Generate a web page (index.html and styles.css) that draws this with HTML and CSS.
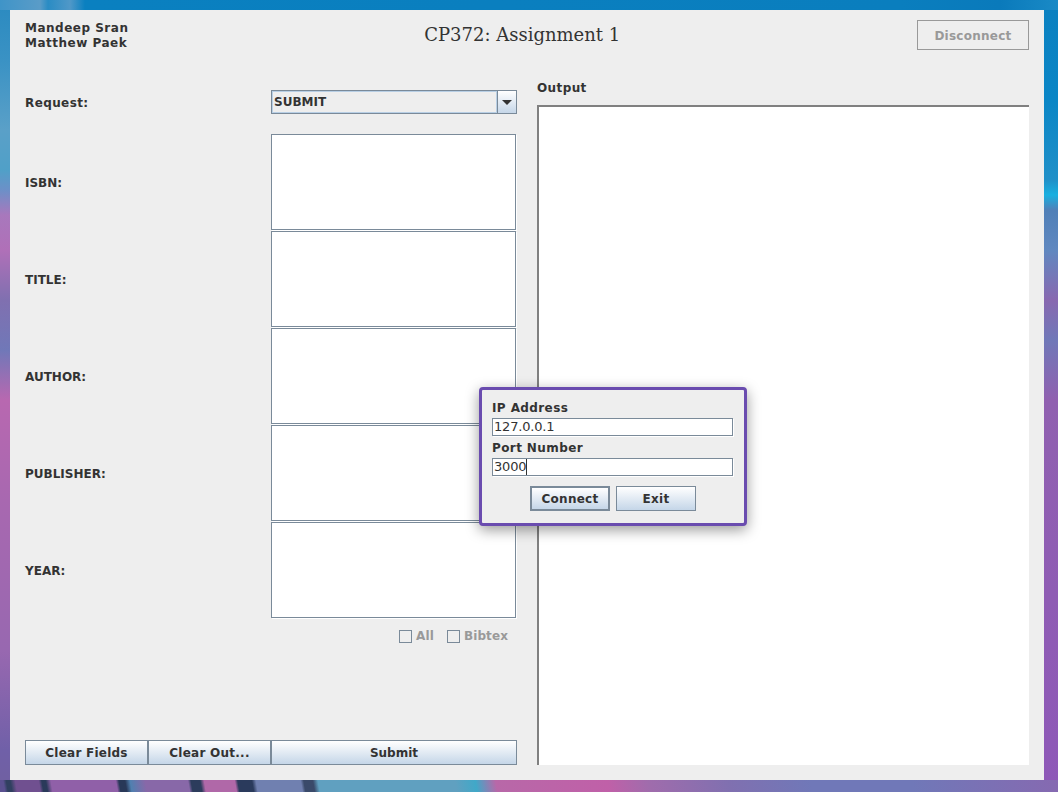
FILE: index.html
```html
<!DOCTYPE html>
<html lang="en">
<head>
    <meta charset="UTF-8">
    <title>CP372: Assignment 1</title>
    <link rel="stylesheet" href="styles.css">
</head>
<body>
    <div id="window">
        <div id="header">
            <div id="authors">Mandeep Sran<br>Matthew Paek</div>
            <div id="title">CP372: Assignment 1</div>
            <div id="disconnect">Disconnect</div>
        </div>
        <div id="main">
            <div id="left-col">
                <div class="form-row request-row">
                    <div class="field-label">Request:</div>
                    <div id="combo">
                        <div id="combo-value">SUBMIT</div>
                        <div id="combo-arrow"><span></span></div>
                    </div>
                </div>
                <div class="form-row"><div class="field-label caps">ISBN:</div><div class="text-area"></div></div>
                <div class="form-row"><div class="field-label caps">TITLE:</div><div class="text-area"></div></div>
                <div class="form-row"><div class="field-label caps">AUTHOR:</div><div class="text-area"></div></div>
                <div class="form-row"><div class="field-label caps">PUBLISHER:</div><div class="text-area"></div></div>
                <div class="form-row"><div class="field-label caps">YEAR:</div><div class="text-area"></div></div>
                <div id="checks">
                    <div class="check"><span class="box"></span>All</div>
                    <div class="check"><span class="box"></span>Bibtex</div>
                </div>
                <div id="actions">
                    <div class="btn action-btn">Clear Fields</div>
                    <div class="btn action-btn">Clear Out...</div>
                    <div class="btn action-btn submit-btn">Submit</div>
                </div>
            </div>
            <div id="right-col">
                <div id="output-label">Output</div>
                <div id="output"></div>
            </div>
        </div>
    </div>

    <div id="dialog">
        <div class="dialog-label">IP Address</div>
        <div class="dialog-input">127.0.0.1</div>
        <div class="dialog-label">Port Number</div>
        <div class="dialog-input"><span class="caret">3000</span></div>
        <div id="dialog-buttons">
            <div class="btn dialog-btn focused">Connect</div>
            <div class="btn dialog-btn">Exit</div>
        </div>
    </div>
</body>
</html>
```

FILE: styles.css
```css
html, body {
    height: 100%;
}

/* wallpaper only shows in the strips round the window */
body {
    margin: 0;
    padding: 10px 14px 12px 10px;
    box-sizing: border-box;
    overflow: hidden;
    font-family: "DejaVu Sans", sans-serif;
    font-size: 12px;
    font-weight: bold;
    letter-spacing: 0.4px;
    color: #333333;
    background-color: #8a5fb0;
    background-repeat: no-repeat;
    background-image:
        linear-gradient(90deg, #3f94c8 0, #5a9cc8 40px, #2a8cc4 48px, #5098c8 70px, #0a80c0 85px, #0a7ebe 900px, #0a7abb 1000px, #1a8ac6 1058px),
        linear-gradient(80deg, #5a5090 0, #5a5090 5px, #304060 8px, #304060 12px, #705090 17px, #705090 40px, #2a3a5a 43px, #2a3a5a 47px, #9060a8 52px, #9060a8 116px, #283858 119px, #283858 125px, #5080b0 130px, #8868a8 145px, #8868a8 187px, #2c3c5c 190px, #2c3c5c 199px, #b068a8 203px, #b068a8 233px, #2a3a5c 236px, #2a3a5c 250px, #7080b0 254px, #7080b0 298px, #3a4a6a 301px, #3a4a6a 310px, #60a0c0 315px, #60a0c0 450px, #40a8c8 470px, #b868a8 490px, #c060a8 600px, #a06cac 640px, #8070b0 720px, #7078b8 800px, #7078b8 900px, #8868b0 1058px),
        linear-gradient(180deg, #2a8ac0 0, #3a92c4 60px, #5aa0c8 130px, #50a0c8 170px, #6c90c8 190px, #a878bc 215px, #b070b8 250px, #8070b0 300px, #7078b8 350px, #b868b0 400px, #a868b0 500px, #9868b0 650px, #7060a8 750px, #7060a0 792px),
        linear-gradient(180deg, #0b80c0 0, #0a86c6 100px, #2090c8 180px, #18b0e0 195px, #5080b8 210px, #6088c0 250px, #8868b0 300px, #7078b8 340px, #9060b0 400px, #8e58b8 792px);
    background-size: 100% 10px, 100% 12px, 10px 100%, 14px 100%;
    background-position: 0 0, 0 100%, 0 0, 100% 0;
}

#window {
    height: 770px;
    box-sizing: border-box;
    padding: 10px 15px 15px 15px;
    background-color: #eeeeee;
    display: flex;
    flex-direction: column;
}

#header {
    display: flex;
    justify-content: space-between;
    height: 30px;
}

#authors {
    line-height: 15px;
    padding-top: 1px;
    letter-spacing: 0.5px;
}

#title {
    font-family: "DejaVu Serif", serif;
    font-size: 18px;
    font-weight: normal;
    letter-spacing: 0;
    line-height: 30px;
    margin-left: -1px;
}

#disconnect {
    width: 112px;
    height: 30px;
    box-sizing: border-box;
    border: 1px solid #999999;
    text-align: center;
    line-height: 30px;
    color: #999999;
    letter-spacing: 0.25px;
}

#main {
    flex: 1;
    display: flex;
    gap: 20px;
    margin-top: 31px;
}

#left-col {
    width: 492px;
    display: flex;
    flex-direction: column;
}

.form-row {
    display: flex;
    align-items: center;
    justify-content: space-between;
    margin-bottom: 1px;
}

.request-row {
    height: 42px;
    margin-bottom: 11px;
}

.field-label {
    padding-top: 2px;
}

.caps {
    letter-spacing: 0;
}

#combo {
    width: 246px;
    height: 24px;
    box-sizing: border-box;
    border: 1px solid #7a8a99;
    display: flex;
    background-color: #eeeeee;
}

#combo-value {
    flex: 1;
    border: 1px solid #b8cfe5;
    padding-left: 1px;
    line-height: 20px;
    letter-spacing: 0;
}

#combo-arrow {
    width: 18px;
    border-left: 1px solid #7a8a99;
    background: linear-gradient(180deg, #ffffff, #c5d6e8);
    display: flex;
    align-items: center;
    justify-content: center;
}

#combo-arrow span {
    width: 0;
    height: 0;
    border-left: 5px solid transparent;
    border-right: 5px solid transparent;
    border-top: 5px solid #333333;
}

.text-area {
    width: 245px;
    height: 96px;
    box-sizing: border-box;
    border: 1px solid #7a8a99;
    background-color: #ffffff;
    box-shadow: 1px 1px 0 #ffffff;
    margin-right: 1px;
}

#checks {
    display: flex;
    justify-content: flex-end;
    gap: 13px;
    padding-right: 9px;
    margin-top: 9px;
    color: #999999;
    line-height: 16px;
    letter-spacing: 0.1px;
}

.check {
    display: flex;
    align-items: center;
    gap: 4px;
}

.box {
    width: 13px;
    height: 13px;
    box-sizing: border-box;
    border: 1px solid #7a8a99;
}

.btn {
    box-sizing: border-box;
    border: 1px solid #7a8a99;
    background: linear-gradient(180deg, #ffffff, #c5d6e8);
    text-align: center;
    letter-spacing: 0.25px;
}

#actions {
    display: flex;
    margin-top: auto;
}

.action-btn {
    width: 123px;
    height: 25px;
    line-height: 25px;
}

.submit-btn {
    flex: 1;
    letter-spacing: 0;
}

#right-col {
    flex: 1;
    display: flex;
    flex-direction: column;
}

#output-label {
    height: 25px;
    margin-top: -1px;
    line-height: 17px;
}

#output {
    flex: 1;
    background-color: #ffffff;
    border-top: 2px solid #808080;
    border-left: 2px solid #808080;
}

#dialog {
    position: absolute;
    left: 479px;
    top: 387px;
    width: 268px;
    height: 139px;
    box-sizing: border-box;
    padding: 10px 10px 0 10px;
    background-color: #eeeeee;
    border: 3px solid #6a4caf;
    border-radius: 4px;
    box-shadow: 0 4px 14px rgba(0, 0, 0, 0.4);
}

.dialog-label {
    line-height: 17px;
    height: 15px;
    margin-bottom: 3px;
}

.dialog-input {
    width: 241px;
    height: 18px;
    box-sizing: border-box;
    border: 1px solid #7a8a99;
    background-color: #ffffff;
    box-shadow: 1px 1px 0 #ffffff;
    font-size: 13px;
    font-weight: normal;
    letter-spacing: -0.2px;
    line-height: 16px;
    padding-left: 1px;
    margin-bottom: 4px;
}

.caret {
    border-right: 1px solid #333333;
    display: inline-block;
    height: 16px;
}

#dialog-buttons {
    display: flex;
    justify-content: center;
    gap: 6px;
    margin-top: 10px;
}

.dialog-btn {
    width: 80px;
    height: 25px;
    line-height: 25px;
}

.focused {
    border-width: 2px;
    line-height: 23px;
}
```
